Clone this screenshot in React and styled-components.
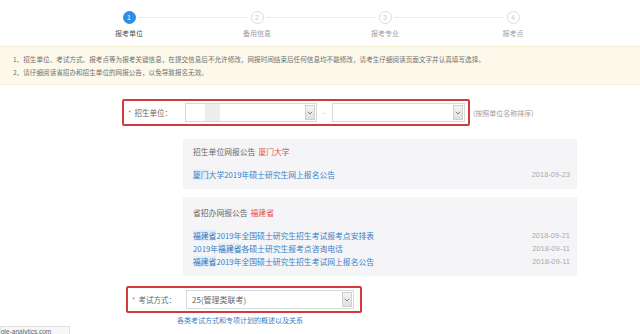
import React from 'react';
import styled, { createGlobalStyle } from 'styled-components';

const palette = {
	blue: '#3a80c6',
	stepBlue: '#2f8de4',
	red: '#d23a3f',
	redText: '#e0504e',
	text: '#555',
	light: '#999',
	panel: '#f5f5f7',
};

const GlobalStyle = createGlobalStyle`
	html, body {
		margin: 0;
		padding: 0;
		background: #fff;
		overflow: hidden;
	}
	body {
		font-family: "Liberation Sans", "Noto Sans CJK SC", sans-serif;
		color: ${palette.text};
	}
`;

const Page = styled.div`
	width: 640px;
	height: 334px;
	display: flex;
	flex-direction: column;
`;

const Stepper = styled.div`
	display: grid;
	grid-template-columns: repeat(4, 128px);
	padding-left: 65px;
	padding-top: 11px;
	height: 35px;
`;

const Step = styled.div`
	position: relative;
	display: flex;
	flex-direction: column;
	align-items: center;

	&:not(:first-child)::before {
		content: '';
		position: absolute;
		top: 6px;
		left: calc(-50% + 9px);
		right: calc(50% + 9px);
		height: 1px;
		background: #ebebeb;
	}
`;

const Circle = styled.div`
	width: 13px;
	height: 13px;
	border-radius: 50%;
	box-sizing: border-box;
	display: flex;
	align-items: center;
	justify-content: center;
	font-size: 7px;
	background: ${({ active }) => (active ? palette.stepBlue : '#fff')};
	border: 1px solid ${({ active }) => (active ? palette.stepBlue : '#dcdcdc')};
	color: ${({ active }) => (active ? '#fff' : '#c8c8c8')};
`;

const StepLabel = styled.div`
	margin-top: 4px;
	font-size: 7px;
	color: ${({ active }) => (active ? '#555' : '#a0a0a0')};
`;

const Notice = styled.div`
	height: 39px;
	box-sizing: border-box;
	padding: 6px 13px 0;
	background: #fdf9ea;
	border-top: 1px solid #f6efd3;
	border-bottom: 1px solid #f6efd3;
	font-size: 6.6px;
	line-height: 13px;
	color: #707070;
	font-family: "Noto Sans CJK SC", sans-serif;
`;

const Form = styled.div`
	display: flex;
	flex-direction: column;
`;

const FieldRow = styled.div`
	display: flex;
	align-items: center;
	margin-top: ${({ top }) => top}px;
	margin-left: ${({ left }) => left}px;
`;

const Highlight = styled.div`
	display: flex;
	align-items: center;
	box-sizing: border-box;
	width: ${({ w }) => w}px;
	height: 27px;
	border: 2px solid ${palette.red};
	border-radius: 2px;
	padding-left: 4px;
`;

const Label = styled.div`
	width: ${({ w }) => w}px;
	font-size: 7.5px;
	color: #666;
	font-family: "Noto Sans CJK SC", sans-serif;

	span {
		color: #e66;
		margin-right: 3px;
	}
`;

const Select = styled.div`
	display: flex;
	align-items: center;
	box-sizing: border-box;
	width: ${({ w }) => w}px;
	height: 19px;
	border: 1px solid #d8d8d8;
	background: #fff;
	font-size: 8px;
	color: #666;
	font-family: "Noto Sans CJK SC", sans-serif;
`;

const SelectValue = styled.div`
	flex: 1;
	padding-left: 5px;
	display: flex;
	align-items: center;
	height: 100%;
`;

const Redacted = styled.div`
	width: 15px;
	height: 17px;
	margin-left: 14px;
	background: #ededed;
`;

const Arrow = styled.div`
	width: 10px;
	height: 15px;
	margin-right: 1px;
	box-sizing: border-box;
	border: 1px solid #cfcfcf;
	background: linear-gradient(#f4f4f4, #e0e0e0);
	display: flex;
	align-items: center;
	justify-content: center;
`;

const Dash = styled.div`
	width: 15px;
	text-align: center;
	font-size: 7px;
	color: #aaa;
`;

const Hint = styled.div`
	margin-left: 3px;
	font-size: 7px;
	color: #a0a0a0;
	font-family: "Noto Sans CJK SC", sans-serif;
`;

const Panel = styled.div`
	margin-left: 183px;
	width: 394px;
	height: ${({ h }) => h}px;
	margin-top: ${({ top }) => top}px;
	box-sizing: border-box;
	background: ${palette.panel};
	padding: ${({ pt }) => pt}px 7px 0 10px;
	font-size: 7.8px;
	font-family: "Noto Sans CJK SC", sans-serif;
`;

const PanelTitle = styled.div`
	color: #666;
	line-height: 12px;
	margin-bottom: ${({ gap }) => gap}px;

	em {
		font-style: normal;
		color: ${palette.redText};
		margin-left: 3px;
	}
`;

const NewsRow = styled.div`
	display: flex;
	justify-content: space-between;
	line-height: 13px;
`;

const NewsLink = styled.span`
	color: ${palette.blue};

	b {
		font-weight: normal;
		color: #3474b6;
		background: #e2edf8;
	}
`;

const NewsDate = styled.span`
	color: #aaa;
	font-family: "Liberation Sans", sans-serif;
	font-size: 7.5px;
`;

const HelpLink = styled.div`
	margin-left: 177px;
	margin-top: 2px;
	font-size: 7px;
	color: ${palette.blue};
	font-family: "Noto Sans CJK SC", sans-serif;
`;

const StatusBubble = styled.div`
	position: fixed;
	left: 0;
	bottom: -2px;
	width: 70px;
	height: 10px;
	box-sizing: border-box;
	border: 1px solid #e0e0e0;
	background: #f7f7f7;
	font-size: 6.5px;
	line-height: 9px;
	color: #666;
	overflow: hidden;
	white-space: nowrap;
`;

const Chevron = () => (
	<svg width="6" height="4" viewBox="0 0 6 4">
		<path d="M0.8 0.8 L3 3 L5.2 0.8" fill="none" stroke="#777" strokeWidth="0.9" />
	</svg>
);

const steps = ['报考单位', '备用信息', '报考专业', '报考点'];

const fujianNews = [
	[<><b>福建省</b>2019年全国硕士研究生招生考试报考点安排表</>, '2018-09-21'],
	[<>2019年<b>福建省</b>各硕士研究生报考点咨询电话</>, '2018-09-11'],
	[<><b>福建省</b>2019年全国硕士研究生招生考试网上报名公告</>, '2018-09-11'],
];

export default function App() {
	return (
		<Page>
			<GlobalStyle />
			<Stepper>
				{steps.map((s, i) => (
					<Step key={s}>
						<Circle active={i === 0}>{i + 1}</Circle>
						<StepLabel active={i === 0}>{s}</StepLabel>
					</Step>
				))}
			</Stepper>
			<Notice>
				<div>1、招生单位、考试方式、报考点等为报考关键信息，在提交信息后不允许修改，网报时间结束后任何信息均不能修改，请考生仔细阅读页面文字并认真填写选择。</div>
				<div>2、请仔细阅读省招办和招生单位的网报公告，以免导致报名无效。</div>
			</Notice>
			<Form>
				<FieldRow top={14} left={122}>
					<Highlight w={348}>
						<Label w={57}><span>*</span>招生单位：</Label>
						<Select w={132}>
							<SelectValue><Redacted /></SelectValue>
							<Arrow><Chevron /></Arrow>
						</Select>
						<Dash>-</Dash>
						<Select w={133}>
							<SelectValue />
							<Arrow><Chevron /></Arrow>
						</Select>
					</Highlight>
					<Hint>(按照单位名称排序)</Hint>
				</FieldRow>
				<Panel top={13} h={50} pt={7}>
					<PanelTitle gap={10}>招生单位网报公告<em>厦门大学</em></PanelTitle>
					<NewsRow>
						<NewsLink><b>厦门</b>大学2019年硕士研究生网上报名公告</NewsLink>
						<NewsDate>2018-09-23</NewsDate>
					</NewsRow>
				</Panel>
				<Panel top={8} h={79} pt={10}>
					<PanelTitle gap={10}>省招办网报公告<em>福建省</em></PanelTitle>
					{fujianNews.map(([title, date], i) => (
						<NewsRow key={i}>
							<NewsLink>{title}</NewsLink>
							<NewsDate>{date}</NewsDate>
						</NewsRow>
					))}
				</Panel>
				<FieldRow top={10} left={126}>
					<Highlight w={236}>
						<Label w={54}><span>*</span>考试方式：</Label>
						<Select w={168}>
							<SelectValue>25(管理类联考)</SelectValue>
							<Arrow><Chevron /></Arrow>
						</Select>
					</Highlight>
				</FieldRow>
				<HelpLink>各类考试方式和专项计划的概述以及关系</HelpLink>
			</Form>
			<StatusBubble>gle-analytics.com</StatusBubble>
		</Page>
	);
}
